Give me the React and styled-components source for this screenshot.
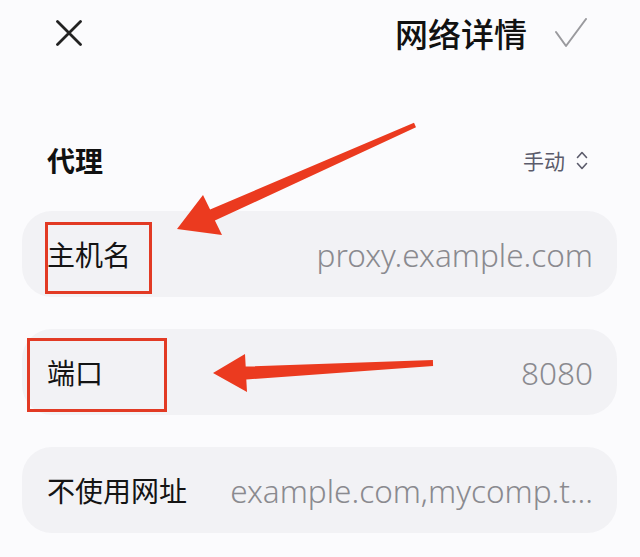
import styled, { createGlobalStyle } from "styled-components";

const GlobalStyle = createGlobalStyle`
  body {
    margin: 0;
    background: #fbfbfd;
    font-family: "Noto Sans", "Noto Sans CJK SC", sans-serif;
  }
`;

const Page = styled.div`
  position: relative;
  width: 640px;
  height: 557px;
  overflow: hidden;
  background: #fbfbfd;
`;

const TopBar = styled.div`
  display: flex;
  align-items: center;
  height: 66px;
  padding: 0 53px 0 56px;
`;

const IconButton = styled.div`
  display: flex;
  align-items: center;
  justify-content: center;
`;

const Title = styled.div`
  margin-left: auto;
  margin-right: 28px;
  font-family: "Noto Sans CJK SC", sans-serif;
  font-size: 33px;
  font-weight: 500;
  color: #111;
`;

const SectionHeader = styled.div`
  display: flex;
  align-items: center;
  justify-content: space-between;
  height: 50px;
  margin-top: 69px;
  margin-bottom: 26px;
  padding: 0 52px 0 47px;
`;

const SectionTitle = styled.div`
  font-family: "Noto Sans CJK SC", sans-serif;
  font-size: 28px;
  font-weight: 700;
  color: #111;
`;

const ModeSelect = styled.div`
  display: flex;
  align-items: center;
  gap: 11px;
  font-family: "Noto Sans CJK SC", sans-serif;
  font-size: 21px;
  color: #5b5b6b;
`;

const List = styled.div`
  display: flex;
  flex-direction: column;
  gap: 32px;
  margin: 0 23px 0 22px;
`;

const Row = styled.div`
  display: flex;
  align-items: center;
  justify-content: space-between;
  gap: 28px;
  height: 86px;
  padding: 0 24px 0 25px;
  border-radius: 30px;
  background: #f2f2f5;
`;

const Label = styled.div`
  flex-shrink: 0;
  font-family: "Noto Sans CJK SC", sans-serif;
  font-size: 28px;
  color: #141414;
`;

const Value = styled.div`
  min-width: 0;
  overflow: hidden;
  white-space: nowrap;
  font-family: "Noto Sans", sans-serif;
  font-size: 31.5px;
  font-weight: 300;
  color: #8a8a8f;
`;

const Highlight = styled.div`
  position: absolute;
  left: ${(p) => p.x}px;
  top: ${(p) => p.y}px;
  width: ${(p) => p.w}px;
  height: ${(p) => p.h}px;
  box-sizing: border-box;
  border: 3px solid #e23a24;
  pointer-events: none;
`;

const Arrows = styled.svg`
  position: absolute;
  inset: 0;
  pointer-events: none;
`;

const rows = [
  { label: "主机名", value: "proxy.example.com" },
  { label: "端口", value: "8080" },
  { label: "不使用网址", value: "example.com,mycomp.t..." },
];

export default function App() {
  return (
    <>
      <GlobalStyle />
      <Page>
        <TopBar>
          <IconButton>
            <svg width="26" height="26" viewBox="0 0 26 26">
              <path d="M1.5 1.5 L24.5 24.5 M24.5 1.5 L1.5 24.5" stroke="#222" strokeWidth="2.8" strokeLinecap="round" />
            </svg>
          </IconButton>
          <Title>网络详情</Title>
          <IconButton>
            <svg width="32" height="30" viewBox="0 0 32 30">
              <path d="M1 14 L11 28 L31 1" fill="none" stroke="#9a9a9e" strokeWidth="2" strokeLinecap="round" strokeLinejoin="round" />
            </svg>
          </IconButton>
        </TopBar>

        <SectionHeader>
          <SectionTitle>代理</SectionTitle>
          <ModeSelect>
            手动
            <svg width="12" height="19" viewBox="0 0 12 19">
              <path d="M1.5 6.5 L6 1.5 L10.5 6.5 M1.5 12.5 L6 17.5 L10.5 12.5" fill="none" stroke="#5b5b6b" strokeWidth="1.6" strokeLinecap="round" strokeLinejoin="round" />
            </svg>
          </ModeSelect>
        </SectionHeader>

        <List>
          {rows.map((row) => (
            <Row key={row.label}>
              <Label>{row.label}</Label>
              <Value>{row.value}</Value>
            </Row>
          ))}
        </List>

        <Highlight x={45} y={222} w={107} h={72} />
        <Highlight x={27} y={338} w={140} h={74} />

        <Arrows width="640" height="557" viewBox="0 0 640 557">
          <polygon
            points="414,122.7 416,127.3 214.9,220.5 222,235 177,229 203,195 210.1,209.5"
            fill="#eb3a1f"
          />
          <polygon
            points="432.9,360 433.1,366 246.3,379.5 247,392 213,373 245,354 245.7,366.5"
            fill="#eb3a1f"
          />
        </Arrows>
      </Page>
    </>
  );
}
